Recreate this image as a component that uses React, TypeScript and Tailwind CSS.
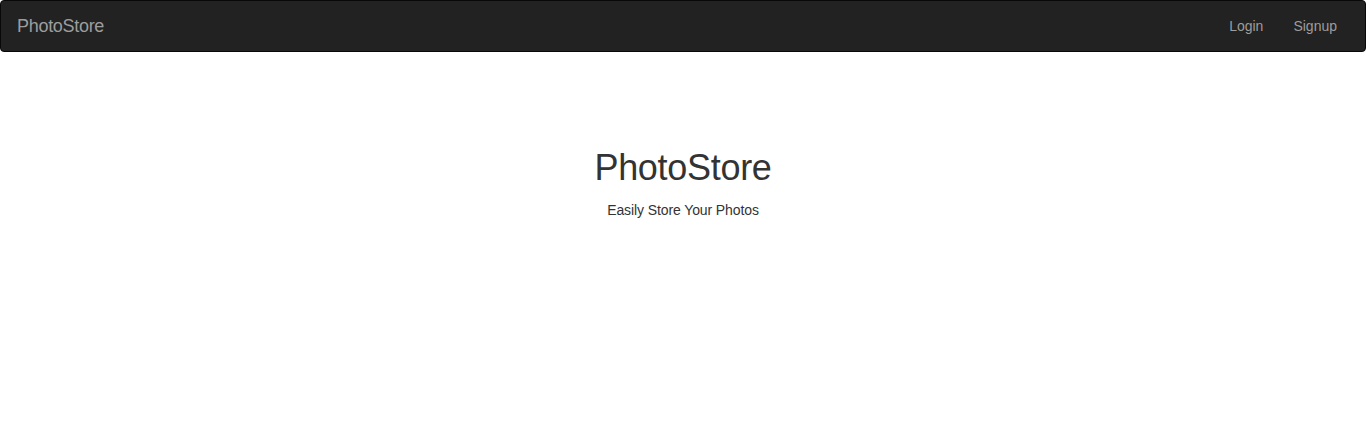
export default function App() {
  return (
    <div className="min-h-screen bg-white font-['Liberation_Sans',Arial,sans-serif] text-[14px] leading-[20px] text-[#333]">
      {/* Navbar */}
      <nav className="mb-5 flex h-[52px] items-stretch justify-between rounded border border-[#080808] bg-[#222] pl-[15px] pr-[13px]">
        <a className="-ml-[15px] flex items-center px-[16px] pb-px text-[18px] leading-[20px] tracking-[-0.3px] text-[#9d9d9d]">PhotoStore</a>
        <ul className="flex">
          <li>
            <a className="flex h-full items-center px-[15px] text-[#9d9d9d]">Login</a>
          </li>
          <li>
            <a className="flex h-full items-center px-[15px] text-[#9d9d9d]">Signup</a>
          </li>
        </ul>
      </nav>

      {/* Hero */}
      <div className="px-[15px] pt-14 text-center">
        <h1 className="mt-5 mb-3 text-[36px] leading-[39.6px] font-normal tracking-[-0.3px]">PhotoStore</h1>
        <p className="tracking-[-0.1px]">Easily Store Your Photos</p>
      </div>
    </div>
  )
}
